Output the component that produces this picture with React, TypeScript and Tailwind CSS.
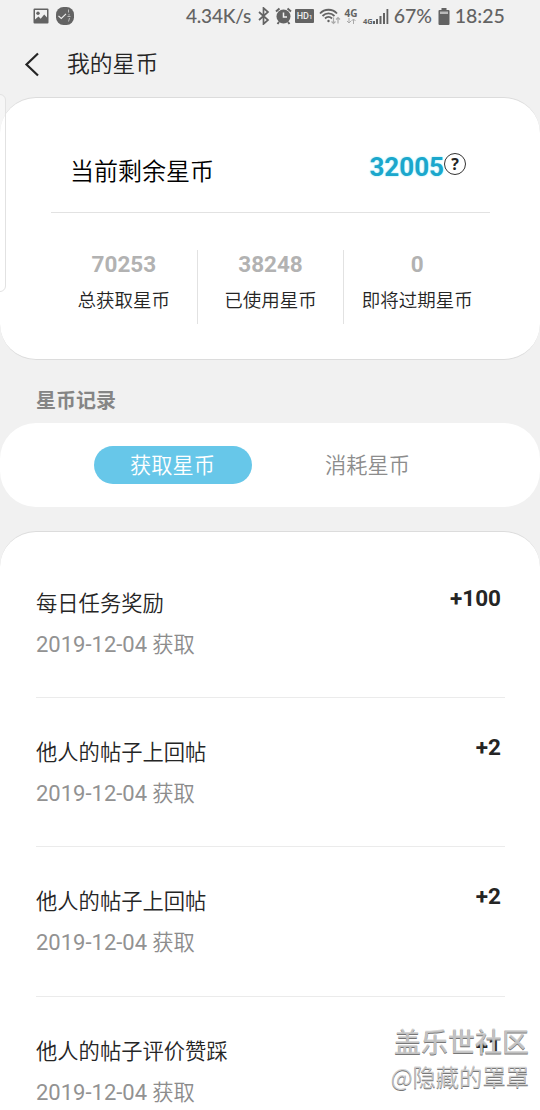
import { useState } from 'react';

const stats = [
  { value: '70253', label: '总获取星币' },
  { value: '38248', label: '已使用星币' },
  { value: '0', label: '即将过期星币' },
];

const records = [
  { title: '每日任务奖励', date: '2019-12-04', amount: '+100' },
  { title: '他人的帖子上回帖', date: '2019-12-04', amount: '+2' },
  { title: '他人的帖子上回帖', date: '2019-12-04', amount: '+2' },
  { title: '他人的帖子评价赞踩', date: '2019-12-04', amount: '+1' },
];

function StatusBar() {
  return (
    <div className="flex h-8 items-center pl-[33px] text-[#636363]">
      <svg width="16" height="16" viewBox="0 0 16 16">
        <path
          fillRule="evenodd"
          fill="currentColor"
          d="M1.5 .5h13a1 1 0 0 1 1 1v13a1 1 0 0 1-1 1h-13a1 1 0 0 1-1-1v-13a1 1 0 0 1 1-1zM2 2v9.5l3.5-3 2.2 2.2 3.5-4.2 2.8 3V2z"
        />
        <circle cx="5" cy="5.2" r="1.7" fill="currentColor" />
      </svg>
      <svg className="ml-[7px]" width="18" height="18" viewBox="0 0 18 18" fill="none">
        <rect width="18" height="18" rx="7.5" fill="currentColor" />
        <path d="M2.5 9l2.8 2.5L10 6.8" stroke="#eee" strokeWidth="1.1" />
        <path d="M12.5 2.5v3M13 7v1.5M11.5 9.5h3M13.5 11l-1 3.5" stroke="#bbb" />
      </svg>

      <div className="ml-[112px] w-[66px] whitespace-nowrap font-['Lato',sans-serif] text-[19px] font-medium leading-8 tracking-[-0.2px]">4.34K/s</div>
      <svg className="ml-[6px]" width="12" height="18" viewBox="0 0 12 18" fill="none" stroke="currentColor" strokeWidth="1.7">
        <path d="M1 5l9 8-4.5 4V1L10 5l-9 8" />
      </svg>
      <svg className="ml-[5px]" width="17" height="18" viewBox="0 0 17 18" fill="none">
        <circle cx="8.5" cy="9.5" r="7" fill="currentColor" />
        <path d="M1 4.5L4.5 1.5M16 4.5l-3.5-3M4 15l-1.5 2M13 15l1.5 2" stroke="currentColor" strokeWidth="2" />
        <path d="M8.5 5.5V10H12" stroke="#f1f1f1" strokeWidth="1.5" />
      </svg>
      <div className="ml-[3px] h-[14px] w-[19px] whitespace-nowrap rounded-[1px] bg-[#636363] text-center font-['Roboto',sans-serif] text-[9px] font-medium leading-[14px] text-[#eee]">
        HD<span className="text-[6px]">1</span>
      </div>
      <svg className="ml-[5px]" width="22" height="18" viewBox="0 0 22 18" fill="none" stroke="currentColor" strokeWidth="1.8">
        <path d="M1 6.5C5.5 1.5 13.5 1.5 18 6.5M3.5 9c3.5-3.5 8.5-3.5 12 0M6 11.5c2-2 5-2 7 0" />
        <circle cx="9.5" cy="14" r="1.2" fill="currentColor" stroke="none" />
        <path d="M14.5 10.5v6M12.5 14.5l2 2 2-2M19 16.5v-6M17 12.5l2-2 2 2" stroke="#aaa" strokeWidth="1.2" />
      </svg>
      <div className="ml-[3px] flex w-[14px] flex-col items-center">
        <span className="font-['Open_Sans',sans-serif] text-[10px] font-bold leading-[9px]">4G</span>
        <svg width="10" height="6" viewBox="0 0 10 6" fill="none" stroke="#aaa">
          <path d="M3 0v5M1 3l2 2 2-2M7.5 6V1M5.5 3l2-2 2 2" />
        </svg>
      </div>
      <div className="ml-[5px] pt-[9px] font-['Open_Sans',sans-serif] text-[7.5px] font-bold leading-[8px]">4G</div>
      <svg width="16" height="15" viewBox="0 0 16 15" fill="currentColor">
        <path d="M0 12h2v3H0zM3 10h2v5H3zM6.5 7h2v8h-2zM10 4h2v11h-2zM13.5 0h1.8v15h-1.8z" />
      </svg>
      <div className="ml-[5px] w-[38px] font-['Lato',sans-serif] text-[19.5px] font-medium leading-8">67%</div>
      <svg className="ml-[6px]" width="12" height="17" viewBox="0 0 12 17">
        <path d="M3.5 0h5v2h2a1 1 0 0 1 1 1v13a1 1 0 0 1-1 1h-9a1 1 0 0 1-1-1V3a1 1 0 0 1 1-1h2z" fill="currentColor" />
        <path d="M2 3.5h8V6H2z" fill="#bbb" />
      </svg>
      <div className="ml-[5px] whitespace-nowrap font-['Lato',sans-serif] text-[19.5px] font-medium leading-8">18:25</div>
    </div>
  );
}

export default function App() {
  const [tab, setTab] = useState(0);

  return (
    <div className="relative h-[1110px] w-[540px] overflow-hidden bg-[#f1f1f1] font-['Roboto','Noto_Sans_CJK_SC',sans-serif] text-[#252525]">
      <StatusBar />

      {/* Header */}
      <header className="flex h-[65px] items-center pl-6">
        <svg width="16" height="26" viewBox="0 0 16 26" fill="none" stroke="#252525" strokeWidth="2.2">
          <path d="M14 1.5L2.5 12.5 14 23.5" />
        </svg>
        <h1 className="ml-[27px] pt-px text-[22.8px] font-[350] leading-8">我的星币</h1>
      </header>

      {/* Balance */}
      <section className="h-[263px] rounded-[36px] border-y border-[#dcdcdc] bg-white pl-[51px] pr-[50px]">
        <div className="flex h-[115px] justify-between border-b border-[#e2e2e2] pl-[19px] pr-6">
          <span className="mt-[58px] text-[24px] font-[350] leading-8 text-black">当前剩余星币</span>
          <div className="mt-[53px] flex">
            <span className="text-[26px] font-bold leading-8 text-[#1ba7cc] [text-shadow:0_0_2px_#8fe8f5]">32005</span>
            <span className="mt-[2px] flex size-[22px] items-center justify-center rounded-full border border-[#333] font-['Open_Sans',sans-serif] text-[16px] font-bold leading-none">?</span>
          </div>
        </div>
        <div className="mt-[37px] flex h-[74px] divide-x divide-[#e2e2e2]">
          {stats.map((s) => (
            <div key={s.label} className="flex-1 whitespace-nowrap text-center">
              <div className="text-[22.5px] font-bold leading-7 text-[#b2b2b2]">{s.value}</div>
              <div className="mt-[9px] text-[18.5px] font-[350] leading-7">{s.label}</div>
            </div>
          ))}
        </div>
      </section>

      <h2 className="h-[63px] pl-9 pt-[25px] text-[20px] font-bold leading-8 text-[#858585]">星币记录</h2>

      {/* Tabs */}
      <div className="flex h-[84px] items-center rounded-[36px] bg-white pl-[94px]">
        {['获取星币', '消耗星币'].map((name, i) => (
          <button
            key={name}
            onClick={() => setTab(i)}
            className={`mr-[37px] h-[38px] w-[158px] rounded-full pr-px pt-px text-[21.2px] font-[350] leading-[37px] ${
              tab === i ? 'bg-[#67c7e9] text-white' : 'text-[#8c8c8c]'
            }`}
          >
            {name}
          </button>
        ))}
      </div>

      {/* Records */}
      <section className="mt-6 h-[620px] rounded-t-[36px] border-t border-[#dcdcdc] bg-white pl-9 pr-[35px] pt-[17px]">
        {records.map((r, i) => (
          <div key={i} className="flex h-[149.2px] justify-between border-b border-[#ebebeb] pr-[4px] pt-[39px]">
            <div>
              <div className="text-[21.3px] font-[350] leading-8">{r.title}</div>
              <div className="mt-[9px] text-[21.3px] font-[350] leading-8 text-[#8c8c8c]">
                <span className="text-[22px] font-normal text-[#929292]">{r.date}</span> 获取
              </div>
            </div>
            <div className="mt-[-6px] text-[22.5px] font-bold leading-8">{r.amount}</div>
          </div>
        ))}
      </section>

      {/* Edge panel handle */}
      <div className="absolute left-[-10px] top-[94px] h-[198px] w-4 rounded-[6px] border border-[#e2e2e2] bg-white/40" />

      {/* Watermark */}
      <div className="absolute right-[11px] top-[1023px] whitespace-nowrap text-right font-['Noto_Sans_CJK_SC',sans-serif] text-[#cfcfcf]/85 [text-shadow:0_1px_0_#777]">
        <div className="text-[27px] font-medium leading-9">盖乐世社区</div>
        <div className="text-[23.3px] font-[350] leading-[34px]">@隐藏的罩罩</div>
      </div>
    </div>
  );
}
